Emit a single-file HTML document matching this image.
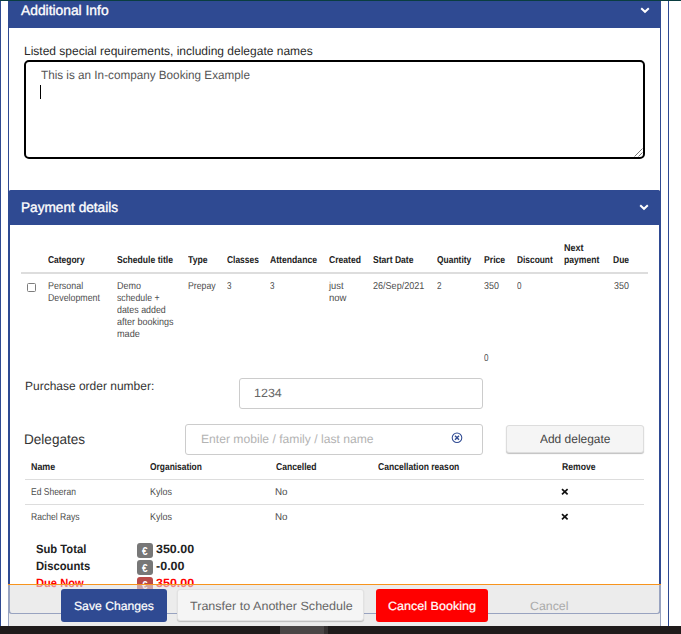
<!DOCTYPE html>
<html lang="en">
<head>
<meta charset="utf-8">
<title>Booking</title>
<style>
html,body{margin:0;padding:0;}
body{width:681px;height:634px;overflow:hidden;background:#fff;position:relative;font-family:"Liberation Sans",sans-serif;text-rendering:geometricPrecision;}
.a{position:absolute;box-sizing:border-box;}
.t{position:absolute;white-space:nowrap;display:block;transform-origin:0 0;}
.blue{background:#2f4a92;}
.inp{border:1px solid #ccc;border-radius:3px;background:#fff;}
.badge{background:#777;border-radius:3px;width:16px;height:15px;left:137px;}
.btn{border-radius:3px;}
</style>
</head>
<body>
<!-- page frame lines -->
<div class="a" style="left:0;top:0;width:681px;height:1px;background:#0a3d40;"></div>
<div class="a blue" style="left:0;top:1px;width:1px;height:625px;"></div>
<div class="a blue" style="left:668px;top:1px;width:1px;height:625px;"></div>
<!-- outer container borders -->
<div class="a blue" style="left:8px;top:1px;width:1px;height:625px;"></div>
<div class="a blue" style="left:660px;top:1px;width:1px;height:625px;"></div>

<!-- panel 1 : Additional Info -->
<div class="a blue" style="left:8px;top:1px;width:653px;height:27px;"></div>
<svg class="a" style="left:639px;top:6px;" width="12" height="9" viewBox="0 0 12 9"><path d="M2.2 2.2 L6 5.8 L9.8 2.2" fill="none" stroke="#fff" stroke-width="2"/></svg>
<div class="a" style="left:24px;top:60px;width:621px;height:99px;border:2px solid #000;border-radius:5px;background:#fff;"></div>
<div class="a" style="left:40px;top:85px;width:1px;height:14px;background:#000;"></div>
<svg class="a" style="left:633px;top:147px;" width="10" height="10" viewBox="0 0 10 10"><path d="M9.5 1.5 L1.5 9.5 M9.5 5.5 L5.5 9.5" stroke="#777" stroke-width="1" fill="none"/></svg>

<!-- panel 2 : Payment details -->
<div class="a" style="left:8px;top:190px;width:653px;height:424px;border:2px solid #2f4a92;border-bottom-width:1px;border-radius:4px;"></div>
<div class="a blue" style="left:8px;top:190px;width:653px;height:35px;border-radius:4px 4px 0 0;"></div>
<svg class="a" style="left:638px;top:203px;" width="12" height="9" viewBox="0 0 12 9"><path d="M2.2 2.2 L6 5.8 L9.8 2.2" fill="none" stroke="#fff" stroke-width="2"/></svg>

<!-- table 1 -->
<div class="a" style="left:21px;top:272px;width:627px;height:2px;background:#ddd;"></div>
<div class="a" style="left:27px;top:283px;width:9px;height:9px;border:1px solid #7d7d7d;border-radius:1.5px;background:#fff;"></div>

<!-- inputs -->
<div class="a inp" style="left:239px;top:378px;width:244px;height:31px;"></div>
<div class="a inp" style="left:185px;top:424px;width:298px;height:31px;"></div>
<svg class="a" style="left:451px;top:432px;" width="12" height="12" viewBox="0 0 12 12"><circle cx="6" cy="5.7" r="4.8" fill="none" stroke="#2f4a92" stroke-width="1.05"/><path d="M4 3.7 L8 7.7 M8 3.7 L4 7.7" stroke="#2f4a92" stroke-width="1.4" fill="none"/></svg>
<div class="a" style="left:506px;top:425px;width:138px;height:28px;background:#f5f5f5;border:1px solid #ddd;border-radius:3px;box-shadow:0 1px 1px rgba(0,0,0,.25);"></div>

<!-- delegates table -->
<div class="a" style="left:25px;top:479px;width:619px;height:1px;background:#ddd;"></div>
<div class="a" style="left:25px;top:504px;width:619px;height:1px;background:#ddd;"></div>
<svg class="a" style="left:560.5px;top:488px;" width="8" height="8" viewBox="0 0 8 8"><path d="M1 1.2 L6.6 6.4 M6.6 1.2 L1 6.4" stroke="#111" stroke-width="1.7" fill="none"/></svg>
<svg class="a" style="left:560.5px;top:513px;" width="8" height="8" viewBox="0 0 8 8"><path d="M1 1.2 L6.6 6.4 M6.6 1.2 L1 6.4" stroke="#111" stroke-width="1.7" fill="none"/></svg>

<!-- totals badges -->
<div class="a badge" style="top:543px;"></div>
<div class="a badge" style="top:560px;"></div>
<div class="a badge" style="top:577px;background:#b94a48;"></div>

<span id="t0" class="t" style="left:21.13px;top:1.00px;font-size:14px;line-height:18px;font-weight:400;color:#fff;transform:scaleX(0.9870);-webkit-text-stroke:0.35px #fff;">Additional Info</span>
<span id="t1" class="t" style="left:20.78px;top:198.00px;font-size:14px;line-height:18px;font-weight:400;color:#fff;transform:scaleX(0.9745);-webkit-text-stroke:0.35px #fff;">Payment details</span>
<span id="t2" class="t" style="left:23.92px;top:43.00px;font-size:12px;line-height:16px;font-weight:400;color:#2a2a2a;transform:scaleX(0.9996);">Listed special requirements, including delegate names</span>
<span id="t3" class="t" style="left:40.82px;top:67.00px;font-size:12px;line-height:16px;font-weight:400;color:#555;transform:scaleX(0.9758);">This is an In-company Booking Example</span>
<span id="t4" class="t" style="left:48.41px;top:254.00px;font-size:10px;line-height:14px;font-weight:700;color:#222;transform:scaleX(0.8444);">Category</span>
<span id="t5" class="t" style="left:117.19px;top:254.00px;font-size:10px;line-height:14px;font-weight:700;color:#222;transform:scaleX(0.8603);">Schedule title</span>
<span id="t6" class="t" style="left:187.91px;top:254.00px;font-size:10px;line-height:14px;font-weight:700;color:#222;transform:scaleX(0.8631);">Type</span>
<span id="t7" class="t" style="left:226.91px;top:254.00px;font-size:10px;line-height:14px;font-weight:700;color:#222;transform:scaleX(0.8420);">Classes</span>
<span id="t8" class="t" style="left:269.84px;top:254.00px;font-size:10px;line-height:14px;font-weight:700;color:#222;transform:scaleX(0.8644);">Attendance</span>
<span id="t9" class="t" style="left:328.89px;top:254.00px;font-size:10px;line-height:14px;font-weight:700;color:#222;transform:scaleX(0.8592);">Created</span>
<span id="t10" class="t" style="left:373.20px;top:254.00px;font-size:10px;line-height:14px;font-weight:700;color:#222;transform:scaleX(0.8569);">Start Date</span>
<span id="t11" class="t" style="left:436.91px;top:254.00px;font-size:10px;line-height:14px;font-weight:700;color:#222;transform:scaleX(0.8449);">Quantity</span>
<span id="t12" class="t" style="left:483.50px;top:254.00px;font-size:10px;line-height:14px;font-weight:700;color:#222;transform:scaleX(0.8663);">Price</span>
<span id="t13" class="t" style="left:516.67px;top:254.00px;font-size:10px;line-height:14px;font-weight:700;color:#222;transform:scaleX(0.8357);">Discount</span>
<span id="t14" class="t" style="left:563.52px;top:254.00px;font-size:10px;line-height:14px;font-weight:700;color:#222;transform:scaleX(0.8618);">payment</span>
<span id="t15" class="t" style="left:613.17px;top:254.00px;font-size:10px;line-height:14px;font-weight:700;color:#222;transform:scaleX(0.8504);">Due</span>
<span id="t16" class="t" style="left:564.42px;top:242.00px;font-size:10px;line-height:14px;font-weight:700;color:#222;transform:scaleX(0.9017);">Next</span>
<span id="t17" class="t" style="left:47.98px;top:280.00px;font-size:10px;line-height:14px;font-weight:400;color:#4d4d4d;transform:scaleX(0.8909);">Personal</span>
<span id="t18" class="t" style="left:47.98px;top:292.00px;font-size:10px;line-height:14px;font-weight:400;color:#4d4d4d;transform:scaleX(0.8806);">Development</span>
<span id="t19" class="t" style="left:116.86px;top:280.00px;font-size:10px;line-height:14px;font-weight:400;color:#4d4d4d;transform:scaleX(0.8975);">Demo</span>
<span id="t20" class="t" style="left:116.86px;top:292.00px;font-size:10px;line-height:14px;font-weight:400;color:#4d4d4d;transform:scaleX(0.8741);">schedule +</span>
<span id="t21" class="t" style="left:116.86px;top:304.00px;font-size:10px;line-height:14px;font-weight:400;color:#4d4d4d;transform:scaleX(0.8862);">dates added</span>
<span id="t22" class="t" style="left:116.86px;top:316.00px;font-size:10px;line-height:14px;font-weight:400;color:#4d4d4d;transform:scaleX(0.8994);">after bookings</span>
<span id="t23" class="t" style="left:116.86px;top:328.00px;font-size:10px;line-height:14px;font-weight:400;color:#4d4d4d;transform:scaleX(0.9149);">made</span>
<span id="t24" class="t" style="left:187.55px;top:280.00px;font-size:10px;line-height:14px;font-weight:400;color:#4d4d4d;transform:scaleX(0.8721);">Prepay</span>
<span id="t25" class="t" style="left:226.94px;top:280.00px;font-size:10px;line-height:14px;font-weight:400;color:#4d4d4d;transform:scaleX(0.8090);">3</span>
<span id="t26" class="t" style="left:270.44px;top:280.00px;font-size:10px;line-height:14px;font-weight:400;color:#4d4d4d;transform:scaleX(0.8090);">3</span>
<span id="t27" class="t" style="left:328.87px;top:280.00px;font-size:10px;line-height:14px;font-weight:400;color:#4d4d4d;transform:scaleX(0.9326);">just</span>
<span id="t28" class="t" style="left:328.87px;top:292.00px;font-size:10px;line-height:14px;font-weight:400;color:#4d4d4d;transform:scaleX(0.9522);">now</span>
<span id="t29" class="t" style="left:372.57px;top:280.00px;font-size:10px;line-height:14px;font-weight:400;color:#4d4d4d;transform:scaleX(0.9049);">26/Sep/2021</span>
<span id="t30" class="t" style="left:436.75px;top:280.00px;font-size:10px;line-height:14px;font-weight:400;color:#4d4d4d;transform:scaleX(0.8090);">2</span>
<span id="t31" class="t" style="left:483.52px;top:280.00px;font-size:10px;line-height:14px;font-weight:400;color:#4d4d4d;transform:scaleX(0.8904);">350</span>
<span id="t32" class="t" style="left:516.66px;top:280.00px;font-size:10px;line-height:14px;font-weight:400;color:#4d4d4d;transform:scaleX(0.8090);">0</span>
<span id="t33" class="t" style="left:613.88px;top:280.00px;font-size:10px;line-height:14px;font-weight:400;color:#4d4d4d;transform:scaleX(0.8904);">350</span>
<span id="t34" class="t" style="left:483.52px;top:352.00px;font-size:10px;line-height:14px;font-weight:400;color:#4d4d4d;transform:scaleX(0.8090);">0</span>
<span id="t35" class="t" style="left:24.92px;top:378.00px;font-size:12px;line-height:16px;font-weight:400;color:#333;transform:scaleX(0.9986);">Purchase order number:</span>
<span id="t36" class="t" style="left:254.35px;top:385.00px;font-size:12px;line-height:16px;font-weight:400;color:#666;transform:scaleX(1.0412);">1234</span>
<span id="t37" class="t" style="left:24.08px;top:430.00px;font-size:14px;line-height:18px;font-weight:400;color:#333;transform:scaleX(0.9691);">Delegates</span>
<span id="t38" class="t" style="left:200.50px;top:431.00px;font-size:12px;line-height:16px;font-weight:400;color:#b3b3b3;transform:scaleX(1.0106);">Enter mobile / family / last name</span>
<span id="t39" class="t" style="left:539.97px;top:431.00px;font-size:12px;line-height:16px;font-weight:400;color:#444;transform:scaleX(0.9961);">Add delegate</span>
<span id="t40" class="t" style="left:30.93px;top:461.00px;font-size:10px;line-height:14px;font-weight:700;color:#222;transform:scaleX(0.8894);">Name</span>
<span id="t41" class="t" style="left:150.41px;top:461.00px;font-size:10px;line-height:14px;font-weight:700;color:#222;transform:scaleX(0.8415);">Organisation</span>
<span id="t42" class="t" style="left:275.89px;top:461.00px;font-size:10px;line-height:14px;font-weight:700;color:#222;transform:scaleX(0.8590);">Cancelled</span>
<span id="t43" class="t" style="left:378.39px;top:461.00px;font-size:10px;line-height:14px;font-weight:700;color:#222;transform:scaleX(0.8559);">Cancellation reason</span>
<span id="t44" class="t" style="left:561.52px;top:461.00px;font-size:10px;line-height:14px;font-weight:700;color:#222;transform:scaleX(0.8629);">Remove</span>
<span id="t45" class="t" style="left:30.60px;top:486.00px;font-size:10px;line-height:14px;font-weight:400;color:#4d4d4d;transform:scaleX(0.8493);">Ed Sheeran</span>
<span id="t46" class="t" style="left:149.96px;top:486.00px;font-size:10px;line-height:14px;font-weight:400;color:#4d4d4d;transform:scaleX(0.8946);">Kylos</span>
<span id="t47" class="t" style="left:275.25px;top:486.00px;font-size:10px;line-height:14px;font-weight:400;color:#4d4d4d;transform:scaleX(0.9818);">No</span>
<span id="t48" class="t" style="left:30.60px;top:511.00px;font-size:10px;line-height:14px;font-weight:400;color:#4d4d4d;transform:scaleX(0.8581);">Rachel Rays</span>
<span id="t49" class="t" style="left:149.96px;top:511.00px;font-size:10px;line-height:14px;font-weight:400;color:#4d4d4d;transform:scaleX(0.8946);">Kylos</span>
<span id="t50" class="t" style="left:275.25px;top:511.00px;font-size:10px;line-height:14px;font-weight:400;color:#4d4d4d;transform:scaleX(0.9818);">No</span>
<span id="t51" class="t" style="left:35.86px;top:541.00px;font-size:12px;line-height:16px;font-weight:700;color:#222;transform:scaleX(0.9360);">Sub Total</span>
<span id="t52" class="t" style="left:155.85px;top:541.00px;font-size:12px;line-height:16px;font-weight:700;color:#222;transform:scaleX(1.0372);">350.00</span>
<span id="t53" class="t" style="left:35.86px;top:558.00px;font-size:12px;line-height:16px;font-weight:700;color:#222;transform:scaleX(0.9368);">Discounts</span>
<span id="t54" class="t" style="left:155.50px;top:558.00px;font-size:12px;line-height:16px;font-weight:700;color:#222;transform:scaleX(1.0431);">-0.00</span>
<span id="t55" class="t" style="left:35.86px;top:575.00px;font-size:12px;line-height:16px;font-weight:700;color:#ff0000;transform:scaleX(0.9284);">Due Now</span>
<span id="t56" class="t" style="left:155.85px;top:575.00px;font-size:12px;line-height:16px;font-weight:700;color:#ff0000;transform:scaleX(1.0423);">350.00</span>
<span id="t57" class="t" style="left:142.10px;top:545.00px;font-size:10px;line-height:14px;font-weight:700;color:#fff;transform:scaleX(1.0000);text-rendering:auto;">€</span>
<span id="t58" class="t" style="left:142.10px;top:562.00px;font-size:10px;line-height:14px;font-weight:700;color:#fff;transform:scaleX(1.0000);text-rendering:auto;">€</span>
<span id="t59" class="t" style="left:142.10px;top:579.00px;font-size:10px;line-height:14px;font-weight:700;color:#fff;transform:scaleX(1.0000);text-rendering:auto;">€</span>

<!-- footer bar -->
<div class="a" style="left:8px;top:584px;width:653px;height:42px;background:rgba(223,223,223,.6);border-top:1px solid #f7941d;"></div>
<div class="a btn blue" style="left:61px;top:589px;width:106px;height:33px;"></div>
<div class="a btn" style="left:177px;top:589px;width:187px;height:32px;background:#f5f5f5;border:1px solid #e2e2e2;box-shadow:0 1px 1px rgba(0,0,0,.2);"></div>
<div class="a btn" style="left:376px;top:589px;width:112px;height:33px;background:#ff0000;"></div>
<span id="t60" class="t" style="left:73.97px;top:598.00px;font-size:12px;line-height:16px;font-weight:400;color:#fff;transform:scaleX(1.0145);-webkit-text-stroke:0.2px #fff;">Save Changes</span>
<span id="t61" class="t" style="left:190.39px;top:598.00px;font-size:12px;line-height:16px;font-weight:400;color:#666;transform:scaleX(1.0461);">Transfer to Another Schedule</span>
<span id="t62" class="t" style="left:387.93px;top:598.00px;font-size:12px;line-height:16px;font-weight:400;color:#fff;transform:scaleX(1.0458);-webkit-text-stroke:0.2px #fff;">Cancel Booking</span>
<span id="t63" class="t" style="left:530.11px;top:598.00px;font-size:12px;line-height:16px;font-weight:400;color:#aaa;transform:scaleX(1.0300);">Cancel</span>

<!-- bottom dark strip -->
<div class="a" style="left:0;top:626px;width:681px;height:8px;background:#1f1b1b;"></div>
<div class="a" style="left:280px;top:626px;width:44px;height:8px;background:#4a4646;"></div>
<div class="a" style="left:324px;top:626px;width:4px;height:8px;background:#353131;"></div>
</body>
</html>
